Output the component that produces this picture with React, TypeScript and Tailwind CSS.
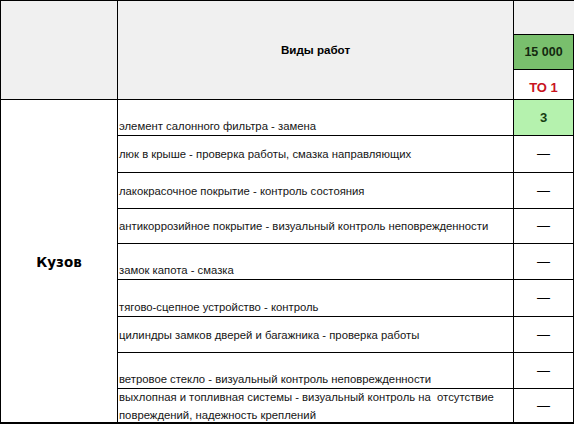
import React from 'react';

type Row = {
  text: React.ReactNode;
  h: string;
  align: 'end' | 'center';
  value?: string;
};

const rows: Row[] = [
  { text: 'элемент салонного фильтра - замена', h: 'h-[36px]', align: 'end', value: '3' },
  { text: 'люк в крыше - проверка работы, смазка направляющих', h: 'h-[37px]', align: 'center' },
  { text: 'лакокрасочное покрытие - контроль состояния', h: 'h-[36px]', align: 'center' },
  { text: 'антикоррозийное покрытие - визуальный контроль неповрежденности', h: 'h-[35px]', align: 'center' },
  { text: 'замок капота - смазка', h: 'h-[36px]', align: 'end' },
  { text: 'тягово-сцепное устройство - контроль', h: 'h-[37px]', align: 'end' },
  { text: 'цилиндры замков дверей и багажника - проверка работы', h: 'h-[36px]', align: 'center' },
  { text: 'ветровое стекло - визуальный контроль неповрежденности', h: 'h-[36px]', align: 'end' },
  {
    text: (
      <>
        выхлопная и топливная системы - визуальный контроль на&nbsp; отсутствие
        <br />
        повреждений, надежность креплений
      </>
    ),
    h: 'h-[33px]',
    align: 'center',
  },
];

const App = () => {
  return (
    <div className="w-[574px] h-[424px] bg-white overflow-hidden font-['Liberation_Sans',Arial,sans-serif] text-[11.3px] text-[#151515]">
      <div className="flex w-[574px] border-l border-t border-b-[3px] border-black">
        {/* left column */}
        <div className="w-[117px] shrink-0 flex flex-col border-r border-black">
          <div className="h-[99px] bg-[#f0f0f0] border-b border-black" />
          <div className="flex-1 flex items-center justify-center pt-[3px]">
            <span className="font-['DejaVu_Sans',Verdana,sans-serif] font-bold text-[13.5px] text-black">Кузов</span>
          </div>
        </div>

        {/* works + interval */}
        <div className="flex-1 flex flex-col">
          <div className="flex h-[99px] border-b border-black">
            <div className="w-[396px] bg-[#f0f0f0] border-r border-black flex items-center justify-center">
              <span className="font-bold text-[11.6px] text-black">Виды работ</span>
            </div>
            <div className="w-[60px] flex flex-col">
              <div className="h-[34px] bg-[#f0f0f0] border-b border-black" />
              <div className="h-[36px] bg-[#79bf6d] border-b border-r border-black flex items-center justify-center font-bold text-[12.5px] text-[#14280f]">
                15 000
              </div>
              <div className="h-[29px] border-r border-black flex items-center justify-center pt-[6px] font-bold text-[13px] text-[#c8141e]">
                ТО 1
              </div>
            </div>
          </div>

          {rows.map((r, i) => (
            <div
              key={i}
              className={`flex ${r.h} ${i < rows.length - 1 ? 'border-b border-black' : ''}`}
            >
              <div
                className={`w-[396px] border-r border-black flex pl-[1px] leading-[18px] whitespace-nowrap ${
                  r.align === 'end' ? 'items-end' : 'items-center'
                }`}
              >
                <span>{r.text}</span>
              </div>
              <div
                className={`w-[60px] border-r border-black flex items-center justify-center ${
                  r.value ? 'bg-[#b5f2ae] font-bold text-[13px] text-[#173d12]' : 'text-[13px] text-black'
                }`}
              >
                {r.value ?? '—'}
              </div>
            </div>
          ))}
        </div>
      </div>
    </div>
  );
};

export default App;
